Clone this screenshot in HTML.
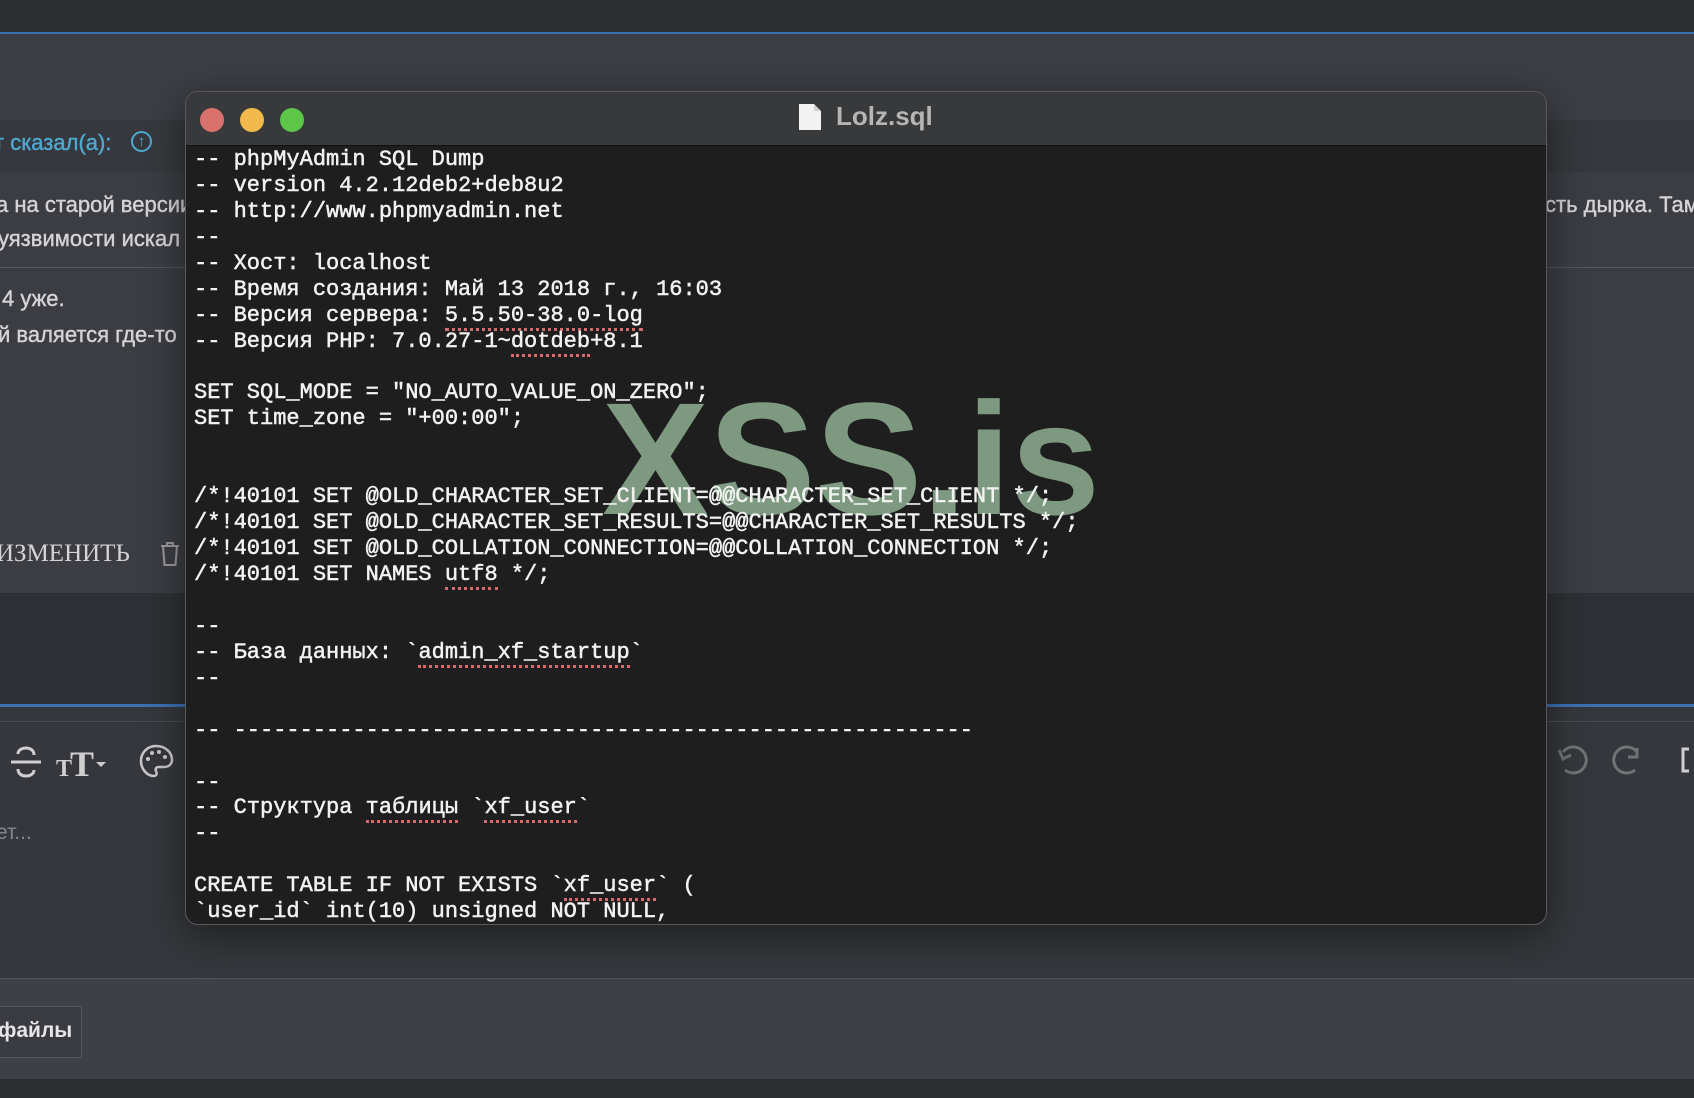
<!DOCTYPE html>
<html><head><meta charset="utf-8"><style>
*{margin:0;padding:0;box-sizing:border-box}
body{width:1694px;height:1098px;overflow:hidden;background:#3c3e44;position:relative;font-family:"Liberation Sans","DejaVu Sans",sans-serif}
.abs{position:absolute}
.t{color:#d4d4d6;font-size:22px;white-space:nowrap;-webkit-text-stroke:0.4px #d4d4d6}
.w{position:absolute;left:185px;top:91px;width:1362px;height:834px;border-radius:13px;background:#1e1e1e;border:1px solid #5a5a5c;overflow:hidden;box-shadow:0 10px 40px rgba(0,0,0,.45)}
.tb{height:54px;background:#38393b;border-bottom:1px solid #111;position:relative}
.dot{position:absolute;top:16px;width:24px;height:24px;border-radius:50%}
pre{position:absolute;left:8px;top:55px;font-family:"Liberation Mono","DejaVu Sans Mono",monospace;font-size:22px;line-height:25.93px;color:#f2f2f2;z-index:2;-webkit-text-stroke:0.5px #f2f2f2}
.u{border-bottom:3px dotted #d86a6a}
.wm{position:absolute;left:416px;top:287px;font-size:160px;font-weight:bold;color:#7d9a80;font-family:"Liberation Sans",sans-serif;z-index:1;line-height:1}
</style></head><body>
<div class="abs" style="left:0;top:0;width:1694px;height:32px;background:#2c2e32"></div>
<div class="abs" style="left:0;top:32px;width:1694px;height:2px;background:#3b70b3"></div>
<div class="abs" style="left:0;top:120px;width:1694px;height:52px;background:#36383d"></div>
<div class="abs" style="left:0;top:172px;width:1694px;height:420px;background:#3b3d43"></div>
<div class="abs t" style="left:-6px;top:130px;color:#4fa8d0;-webkit-text-stroke:0.4px #4fa8d0">т сказал(а):</div>
<div class="abs" style="left:131px;top:131px;width:21px;height:21px;border:2px solid #4fa8d0;border-radius:50%;color:#4fa8d0;font-size:15px;text-align:center;line-height:17px;font-weight:bold">↑</div>
<div class="abs t" style="left:-4px;top:192px">а на старой версии</div>
<div class="abs t" style="left:1545px;top:192px">сть дырка. Там</div>
<div class="abs t" style="left:-2px;top:226px">уязвимости искал</div>
<div class="abs" style="left:0;top:267px;width:1694px;height:1px;background:#55565a"></div>
<div class="abs t" style="left:2px;top:286px">4 уже.</div>
<div class="abs t" style="left:-2px;top:322px">й валяется где-то</div>
<div class="abs" style="left:-4px;top:540px;font-family:'Liberation Serif',serif;font-size:25px;color:#d4d4d6">ИЗМЕНИТЬ</div>
<svg class="abs" style="left:159px;top:541px" width="22" height="26" viewBox="0 0 22 26"><path d="M2 5h18M8 5V2h6v3M4 5l1.5 19h11L18 5" fill="none" stroke="#9a9a9e" stroke-width="2"/></svg>
<div class="abs" style="left:0;top:593px;width:1694px;height:111px;background:#2e3035"></div>
<div class="abs" style="left:0;top:704px;width:1694px;height:3px;background:#3b70b3"></div>
<div class="abs" style="left:0;top:707px;width:1694px;height:271px;background:#35373c"></div>
<div class="abs" style="left:0;top:721px;width:1694px;height:1px;background:#4a4b50"></div>
<svg class="abs" style="left:8px;top:742px" width="100" height="40" viewBox="0 0 100 40"><path d="M3 20h30M26 13c0-5-4-7-8-7s-8 2-8 6M10 27c0 5 4 7 8 7s8-2 8-6" fill="none" stroke="#cfcfd0" stroke-width="3"/><text x="48" y="34" font-family="Liberation Serif" font-size="24" fill="#cfcfd0" font-weight="bold">T</text><text x="62" y="34" font-family="Liberation Serif" font-size="36" fill="#cfcfd0" font-weight="bold">T</text><path d="M88 20h10l-5 5z" fill="#cfcfd0"/></svg>
<svg class="abs" style="left:138px;top:743px" width="36" height="36" viewBox="0 0 36 36"><path d="M18 3C9 3 3 10 3 18s6 15 13 15c3 0 3-3 2-5s0-4 3-4h5c5 0 8-3 8-7C34 9 27 3 18 3z" fill="none" stroke="#c8c8ca" stroke-width="2.5"/><circle cx="10" cy="16" r="2" fill="#c8c8ca"/><circle cx="14" cy="10" r="2" fill="#c8c8ca"/><circle cx="21" cy="9" r="2" fill="#c8c8ca"/><circle cx="27" cy="14" r="2" fill="#c8c8ca"/></svg>
<svg class="abs" style="left:1555px;top:742px" width="139" height="36" viewBox="0 0 139 36"><path d="M8 10a13 13 0 1 1 2 18M4 8l4 9 8-4" fill="none" stroke="#707276" stroke-width="3"/><path d="M82 10a13 13 0 1 0 -2 18" fill="none" stroke="#707276" stroke-width="3"/><path d="M82 6v9h-9" fill="none" stroke="#707276" stroke-width="3"/><path d="M134 7h-6v22h6" fill="none" stroke="#d0d0d2" stroke-width="3"/></svg>
<div class="abs" style="left:-4px;top:821px;color:#85878c;font-size:21px">ет...</div>
<div class="abs" style="left:0;top:978px;width:1694px;height:1px;background:#55565a"></div>
<div class="abs" style="left:0;top:979px;width:1694px;height:100px;background:#3f4045"></div>
<div class="abs" style="left:-2px;top:1006px;width:84px;height:52px;border:1px solid #55565a;background:#3a3b40"></div>
<div class="abs" style="left:-2px;top:1019px;color:#e6e6e8;font-size:21px;font-weight:bold">файлы</div>
<div class="abs" style="left:0;top:1079px;width:1694px;height:19px;background:#2c2e32"></div>

<div class="w">
<div class="tb">
<div class="dot" style="left:14px;background:#d9716c"></div>
<div class="dot" style="left:54px;background:#f2b94c"></div>
<div class="dot" style="left:94px;background:#5dc548"></div>
<svg class="abs" style="left:612px;top:11px" width="24" height="28" viewBox="0 0 24 28"><path d="M1 1h15l7 7v19H1z" fill="#f2f2f2"/><path d="M16 1v7h7" fill="#cfcfcf"/></svg>
<div class="abs" style="left:650px;top:9px;font-size:26px;font-weight:bold;color:#b5b5b5">Lolz.sql</div>
</div>
<div class="wm">XSS.is</div>
<pre>-- phpMyAdmin SQL Dump
-- version 4.2.12deb2+deb8u2
-- http://www.phpmyadmin.net
--
-- Хост: localhost
-- Время создания: Май 13 2018 г., 16:03
-- Версия сервера: <span class="u">5.5.50-38.0-log</span>
-- Версия PHP: 7.0.27-1~<span class="u">dotdeb</span>+8.1

SET SQL_MODE = "NO_AUTO_VALUE_ON_ZERO";
SET time_zone = "+00:00";


/*!40101 SET @OLD_CHARACTER_SET_CLIENT=@@CHARACTER_SET_CLIENT */;
/*!40101 SET @OLD_CHARACTER_SET_RESULTS=@@CHARACTER_SET_RESULTS */;
/*!40101 SET @OLD_COLLATION_CONNECTION=@@COLLATION_CONNECTION */;
/*!40101 SET NAMES <span class="u">utf8</span> */;

--
-- База данных: `<span class="u">admin_xf_startup</span>`
--

-- --------------------------------------------------------

--
-- Структура <span class="u">таблицы</span> `<span class="u">xf_user</span>`
--

CREATE TABLE IF NOT EXISTS `<span class="u">xf_user</span>` (
`user_id` int(10) unsigned NOT NULL,</pre>
</div>
</body></html>
